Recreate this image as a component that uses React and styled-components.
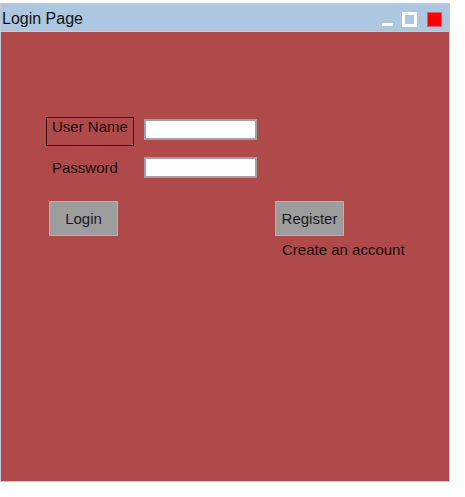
import React from 'react'
import styled, { createGlobalStyle } from 'styled-components'

const Global = createGlobalStyle`
  body {
    margin: 0;
    background: #ffffff;
    font-family: "Liberation Sans", Arial, sans-serif;
  }
`

export default function App() {
  return (
    <>
      <Global />
      <Window>
        <TitleBar>
          <Title>Login Page</Title>
          <Controls>
            <MinBtn />
            <MaxBtn />
            <CloseBtn />
          </Controls>
        </TitleBar>

        <Body>
          <Fields>
            <Label boxed>User Name</Label>
            <Input type='text' />
            <Label pad={3}>Password</Label>
            <Input type='password' />
          </Fields>

          <Actions>
            <Button>Login</Button>
            <RegisterCol>
              <Button>Register</Button>
              <Hint>Create an account</Hint>
            </RegisterCol>
          </Actions>
        </Body>
      </Window>
    </>
  )
}

const Window = styled.div`
  margin-top: 3px;
  width: 450px;
  height: 479px;
  box-sizing: border-box;
  border: 1px solid #c3c9d6;
  display: flex;
  flex-direction: column;
`

const TitleBar = styled.div`
  height: 28px;
  box-sizing: border-box;
  background-color: #adc7e1;
  border-bottom: 1px solid #d9c2c8;
  display: flex;
  align-items: center;
  justify-content: space-between;
  padding: 3px 7px 0 1px;
`

const Title = styled.div`
  font-size: 16px;
  color: #111;
`

const Controls = styled.div`
  display: flex;
  align-items: center;
  gap: 9px;
`

const MinBtn = styled.div`
  width: 11px;
  height: 3px;
  background: #ffffff;
  margin-top: 10px;
`

const MaxBtn = styled.div`
  width: 15px;
  height: 15px;
  box-sizing: border-box;
  border: 3px solid #ffffff;
`

const CloseBtn = styled.div`
  width: 15px;
  height: 15px;
  box-sizing: border-box;
  background: #ff0000;
  border: 1px solid #e05a6a;
  margin-left: 1px;
`

const Body = styled.div`
  flex: 1;
  background-color: #b04a4a;
  padding: 85px 0 0 45px;
`

const Fields = styled.div`
  display: grid;
  grid-template-columns: 98px 113px;
  row-gap: 9px;
  align-items: start;
`

const Label = styled.div`
  width: 88px;
  height: 29px;
  box-sizing: border-box;
  border: 1px solid ${(props) => (props.boxed ? '#3a1414' : 'transparent')};
  padding: ${(props) => props.pad || 0}px 0 0 5px;
  font-size: 15px;
  line-height: 17px;
  color: #1c0a0a;
  white-space: nowrap;
`

const Input = styled.input`
  width: 113px;
  height: 21px;
  box-sizing: border-box;
  margin: 2px 0 0 0;
  border: 2px solid #a3a0a0;
  background: #ffffff;
  padding: 0 2px;
  outline: none;
`

const Actions = styled.div`
  display: flex;
  align-items: flex-start;
  margin-top: 17px;
  padding-left: 3px;
  gap: 157px;
`

const RegisterCol = styled.div`
  display: flex;
  flex-direction: column;
  gap: 5px;
`

const Button = styled.button`
  width: 69px;
  height: 35px;
  box-sizing: border-box;
  background-color: #9d9d9d;
  border: 1px solid #b3b0b0;
  color: #1c1c1c;
  font-family: "Liberation Sans", Arial, sans-serif;
  font-size: 15px;
  padding: 0;
  cursor: pointer;
`

const Hint = styled.div`
  font-size: 15px;
  color: #1c0a0a;
  padding-left: 7px;
`
